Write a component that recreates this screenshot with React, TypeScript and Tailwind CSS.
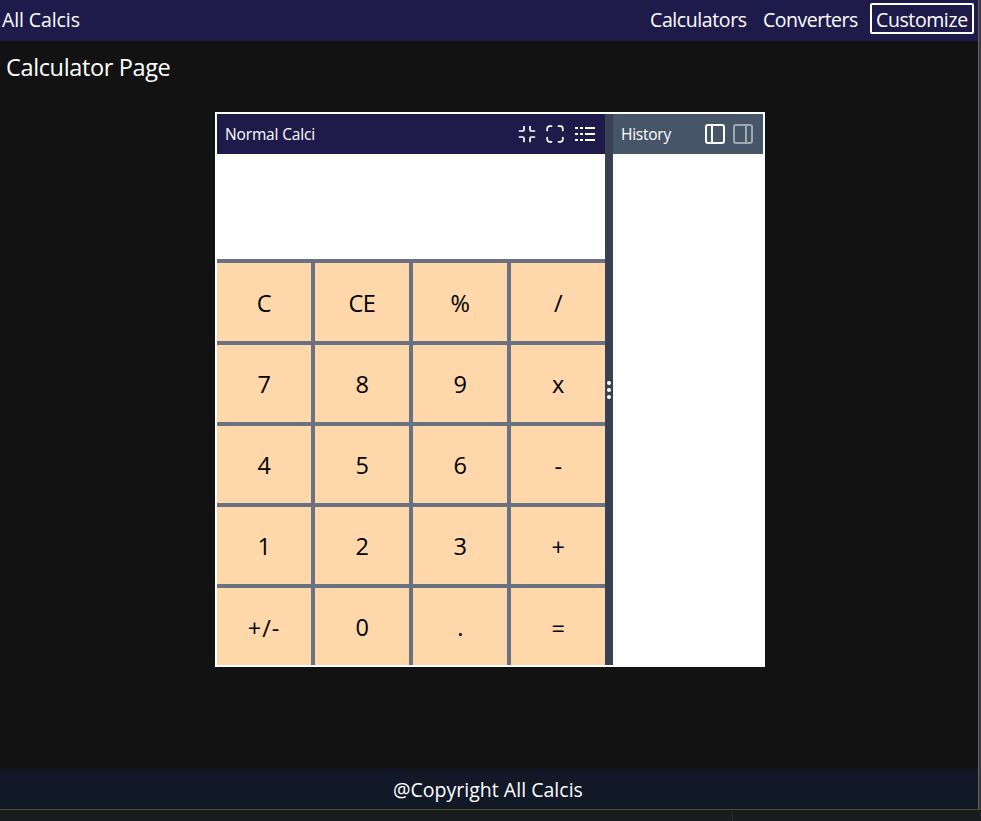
import React from "react";

const keys = ["C", "CE", "%", "/", "7", "8", "9", "x", "4", "5", "6", "-", "1", "2", "3", "+", "+/-", "0", ".", "="];

// Per-key optical adjustments: operators sit slightly lower, the sign key is wider.
function keyStyle(k: string) {
  if (k === "+/-") return "pt-[4px] tracking-[0.9px]";
  if (["C", "CE", "%", "/", "-", "+", "="].includes(k)) return "pt-[4px] tracking-[-0.5px]";
  return "pt-[2px] tracking-[-0.5px]";
}

function CollapseIcon() {
  return (
    <svg width="20" height="20" viewBox="0 0 20 20" fill="none" stroke="currentColor" strokeWidth="1.7" strokeLinecap="round">
      <path d="M7 2.5V5.5A1.5 1.5 0 0 1 5.5 7H2.5M13 2.5V5.5A1.5 1.5 0 0 0 14.5 7H17.5M7 17.5V14.5A1.5 1.5 0 0 0 5.5 13H2.5M13 17.5V14.5A1.5 1.5 0 0 1 14.5 13H17.5" />
    </svg>
  );
}

function ExpandIcon() {
  return (
    <svg width="20" height="20" viewBox="0 0 20 20" fill="none" stroke="currentColor" strokeWidth="1.7" strokeLinecap="round">
      <path d="M2.200 6.500V4.700A2.500 2.500 0 0 1 4.700 2.200H6.500M13.500 2.200H15.300A2.500 2.500 0 0 1 17.800 4.700V6.500M17.800 13.500V15.300A2.500 2.500 0 0 1 15.300 17.800H13.500M6.500 17.800H4.700A2.500 2.500 0 0 1 2.200 15.300V13.500" />
    </svg>
  );
}

function ListIcon() {
  return (
    <svg width="20" height="20" viewBox="0 0 20 20" fill="currentColor" shapeRendering="crispEdges">
      {[3, 9, 15].map((y) => (
        <g key={y}>
          <rect x="0" y={y} width="3" height="2" />
          <rect x="5" y={y} width="3" height="2" />
          <rect x="10" y={y} width="10" height="2" />
        </g>
      ))}
    </svg>
  );
}

function PanelIcon({ right = false }: { right?: boolean }) {
  return (
    <svg width="20" height="20" viewBox="0 0 20 20" fill="none" stroke="currentColor" strokeWidth="2">
      <rect x="1" y="1" width="18" height="18" rx="2" />
      <path d={right ? "M13 1V19" : "M7 1V19"} />
    </svg>
  );
}

export default function App() {
  return (
    <div className="flex h-[821px] w-[981px] flex-col overflow-hidden bg-[#1a1c1e] font-['Open_Sans','Noto_Sans',sans-serif] text-white">
      <div className="flex h-[809px]">
        <div className="flex w-[978px] flex-col bg-[#121212]">
          <header className="flex h-[41px] items-start justify-between bg-[#1e1b4b] pt-[3px] pr-1 pl-[2px] text-[19.5px] leading-[34px]">
            <div className="tracking-[-0.1px]">All Calcis</div>
            <nav className="flex">
              <a className="w-[113px] tracking-[-0.4px]">Calculators</a>
              <a className="w-[107px] tracking-[-0.5px]">Converters</a>
              <a className="h-[31px] w-[104px] rounded-[2px] border-2 border-white pl-1 leading-[30px] tracking-[-0.4px]">Customize</a>
            </nav>
          </header>
          <main className="flex grow flex-col">
            <h1 className="h-[71px] pt-2 pl-[6px] text-[23.5px] leading-9 tracking-[-0.36px]">Calculator Page</h1>
            <section className="ml-[215px] flex h-[555px] w-[550px] border-2 border-white bg-white">
              <div className="flex w-[388px] flex-col">
                <div className="flex h-10 items-center bg-[#1e1b4b] px-2">
                  <span className="grow pt-[2px] text-[15.5px] tracking-[-0.15px]">Normal Calci</span>
                  <div className="flex items-center">
                    <CollapseIcon />
                    <span className="w-2" />
                    <ExpandIcon />
                    <span className="w-[10px]" />
                    <ListIcon />
                    <span className="w-[2px]" />
                  </div>
                </div>
                <div className="h-[105px] bg-white" />
                <div className="grid grow grid-cols-4 grid-rows-[78px_77px_77px_77px_77px] gap-1 bg-gray-500 pt-1">
                  {keys.map((k) => (
                    <button key={k} className={`flex items-center justify-center bg-[#fed7aa] text-[23.5px] text-black ${keyStyle(k)}`}>{k}</button>
                  ))}
                </div>
              </div>
              <div className="flex w-2 flex-col items-center justify-center gap-[3px] bg-[#374151]">
                <i className="size-1 rounded-full bg-white" />
                <i className="size-1 rounded-full bg-white" />
                <i className="size-1 rounded-full bg-white" />
              </div>
              <div className="flex w-[150px] flex-col">
                <div className="flex h-10 items-center bg-[#475569] pr-[10px] pl-2">
                  <span className="grow pt-[2px] text-[15.5px] tracking-[-0.25px]">History</span>
                  <PanelIcon />
                  <span className="ml-2 text-[#a1a7b3]"><PanelIcon right /></span>
                </div>
                <div className="grow bg-white" />
              </div>
            </section>
          </main>
          <footer className="h-10 bg-[#111827] pl-[393px] text-[19.5px] leading-[42px] tracking-[0.02px]">@Copyright All Calcis</footer>
        </div>
        <div className="w-[3px] border-l border-[#626262] bg-[#3a3a3e]" />
      </div>
      <div className="h-px bg-[#4e4e18]" />
      <div className="flex grow"><div className="w-[733px] border-r border-[#28292c]" /></div>
    </div>
  );
}
